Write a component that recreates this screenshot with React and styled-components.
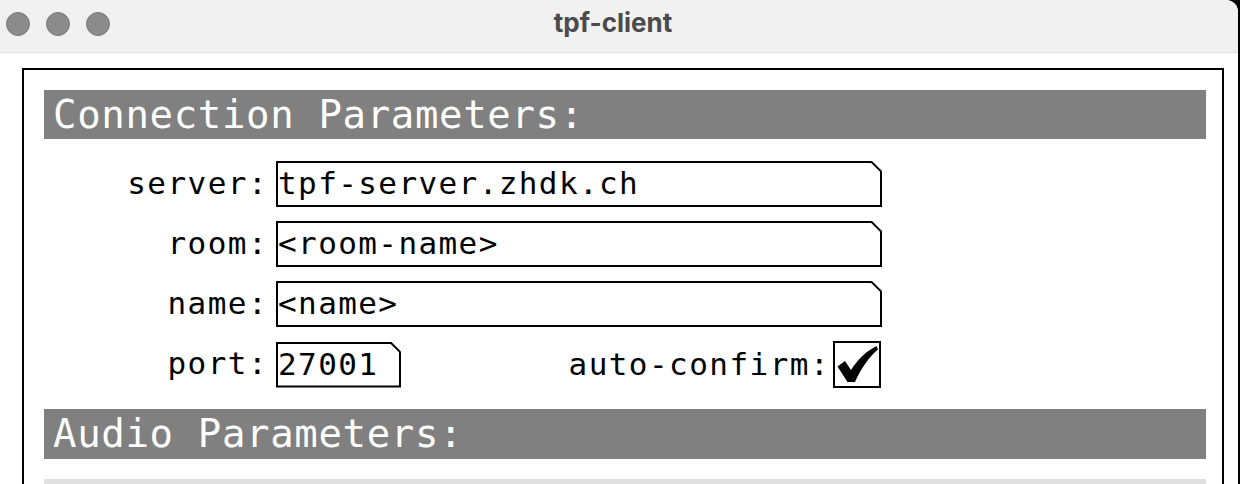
import React from "react";
import styled, { createGlobalStyle } from "styled-components";

const GlobalStyle = createGlobalStyle`
  html, body { margin: 0; padding: 0; background: #000; }
  body { width: 1240px; height: 484px; overflow: hidden; }
  * { box-sizing: border-box; }
`;

const Window = styled.div`
  width: 1238px;
  height: 484px;
  background: #fff;
  border-top-right-radius: 12px;
  overflow: hidden;
  display: flex;
  flex-direction: column;
`;

const TitleBar = styled.div`
  height: 53px;
  flex: none;
  background: #f1f1f1;
  border-bottom: 1px solid #dcdcdc;
  display: grid;
  grid-template-columns: 1fr auto 1fr;
  align-items: center;
  padding: 0 18px 7px 6px;
`;

const Lights = styled.div`
  display: flex;
  gap: 16px;
  padding-top: 3px;
`;

const Light = styled.span`
  width: 24px;
  height: 24px;
  border-radius: 50%;
  background: #8b8b8b;
  border: 1px solid #7a7a7a;
`;

const Title = styled.div`
  font-family: Inter, "Liberation Sans", sans-serif;
  font-weight: 700;
  font-size: 26px;
  color: #4b4b4b;
`;

const Content = styled.div`
  flex: 1;
  display: flex;
  padding: 15px 14px 0 22px;
  min-height: 0;
`;

const Panel = styled.div`
  flex: 1;
  border: 2px solid #000;
  border-bottom: none;
  padding: 20px 16px 0 20px;
  display: flex;
  flex-direction: column;
`;

const SectionHeader = styled.div`
  height: ${(p) => p.$h}px;
  flex: none;
  background: #808080;
  color: #fff;
  font-family: "DejaVu Sans Mono", monospace;
  font-size: 39px;
  letter-spacing: 0.65px;
  line-height: ${(p) => p.$h}px;
  padding-left: 9px;
  white-space: nowrap;
`;

const Form = styled.div`
  display: grid;
  grid-template-columns: 224px 606px;
  column-gap: 8px;
  row-gap: 14px;
  margin: 22px 0 21px;
`;

const mono = `
  font-family: "DejaVu Sans Mono", monospace;
  font-size: 31px;
  letter-spacing: 1.45px;
  color: #000;
  white-space: nowrap;
`;

const Label = styled.div`
  ${mono}
  height: 46px;
  line-height: 45px;
  text-align: right;
`;

const FieldFrame = styled.div`
  width: ${(p) => p.$w}px;
  height: 46px;
  padding: 2px;
  background: #000;
  clip-path: polygon(0 0, calc(100% - 10px) 0, 100% 10px, 100% 100%, 0 100%);
`;

const FieldBody = styled.div`
  ${mono}
  letter-spacing: 1.4px;
  height: 100%;
  background: #fff;
  line-height: 41px;
  clip-path: polygon(0 0, calc(100% - 8.8px) 0, 100% 8.8px, 100% 100%, 0 100%);
`;

const PortRow = styled.div`
  display: flex;
  align-items: center;
  justify-content: space-between;
`;

const Confirm = styled.div`
  display: flex;
  align-items: center;
  gap: 3px;
`;

const CheckBox = styled.div`
  width: 48px;
  height: 47px;
  border: 2px solid #000;
  display: flex;
  align-items: center;
  justify-content: center;
  margin-right: 1px;
`;

const AudioArea = styled.div`
  flex: 1;
  margin-top: 20px;
  background: #e0e0e0;
`;

function TextField({ width, value }) {
  return (
    <FieldFrame $w={width}>
      <FieldBody>{value}</FieldBody>
    </FieldFrame>
  );
}

export default function App() {
  return (
    <>
      <GlobalStyle />
      <Window>
        <TitleBar>
          <Lights>
            <Light />
            <Light />
            <Light />
          </Lights>
          <Title>tpf-client</Title>
          <div />
        </TitleBar>
        <Content>
          <Panel>
            <SectionHeader $h={49}>Connection Parameters:</SectionHeader>
            <Form>
              <Label>server:</Label>
              <TextField width={606} value="tpf-server.zhdk.ch" />
              <Label>room:</Label>
              <TextField width={606} value="<room-name>" />
              <Label>name:</Label>
              <TextField width={606} value="<name>" />
              <Label>port:</Label>
              <PortRow>
                <TextField width={125} value="27001" />
                <Confirm>
                  <Label>auto-confirm:</Label>
                  <CheckBox>
                    <svg width="44" height="43" viewBox="0 0 44 43">
                      <path
                        d="M2.5 23.5 L10 18 L16 27 C23 16 31 8.5 41.5 3 L43 6.5 C34.5 13.5 26.5 24.5 20 39 L12.5 39 Z"
                        fill="#000"
                      />
                    </svg>
                  </CheckBox>
                </Confirm>
              </PortRow>
            </Form>
            <SectionHeader $h={50}>Audio Parameters:</SectionHeader>
            <AudioArea />
          </Panel>
        </Content>
      </Window>
    </>
  );
}
